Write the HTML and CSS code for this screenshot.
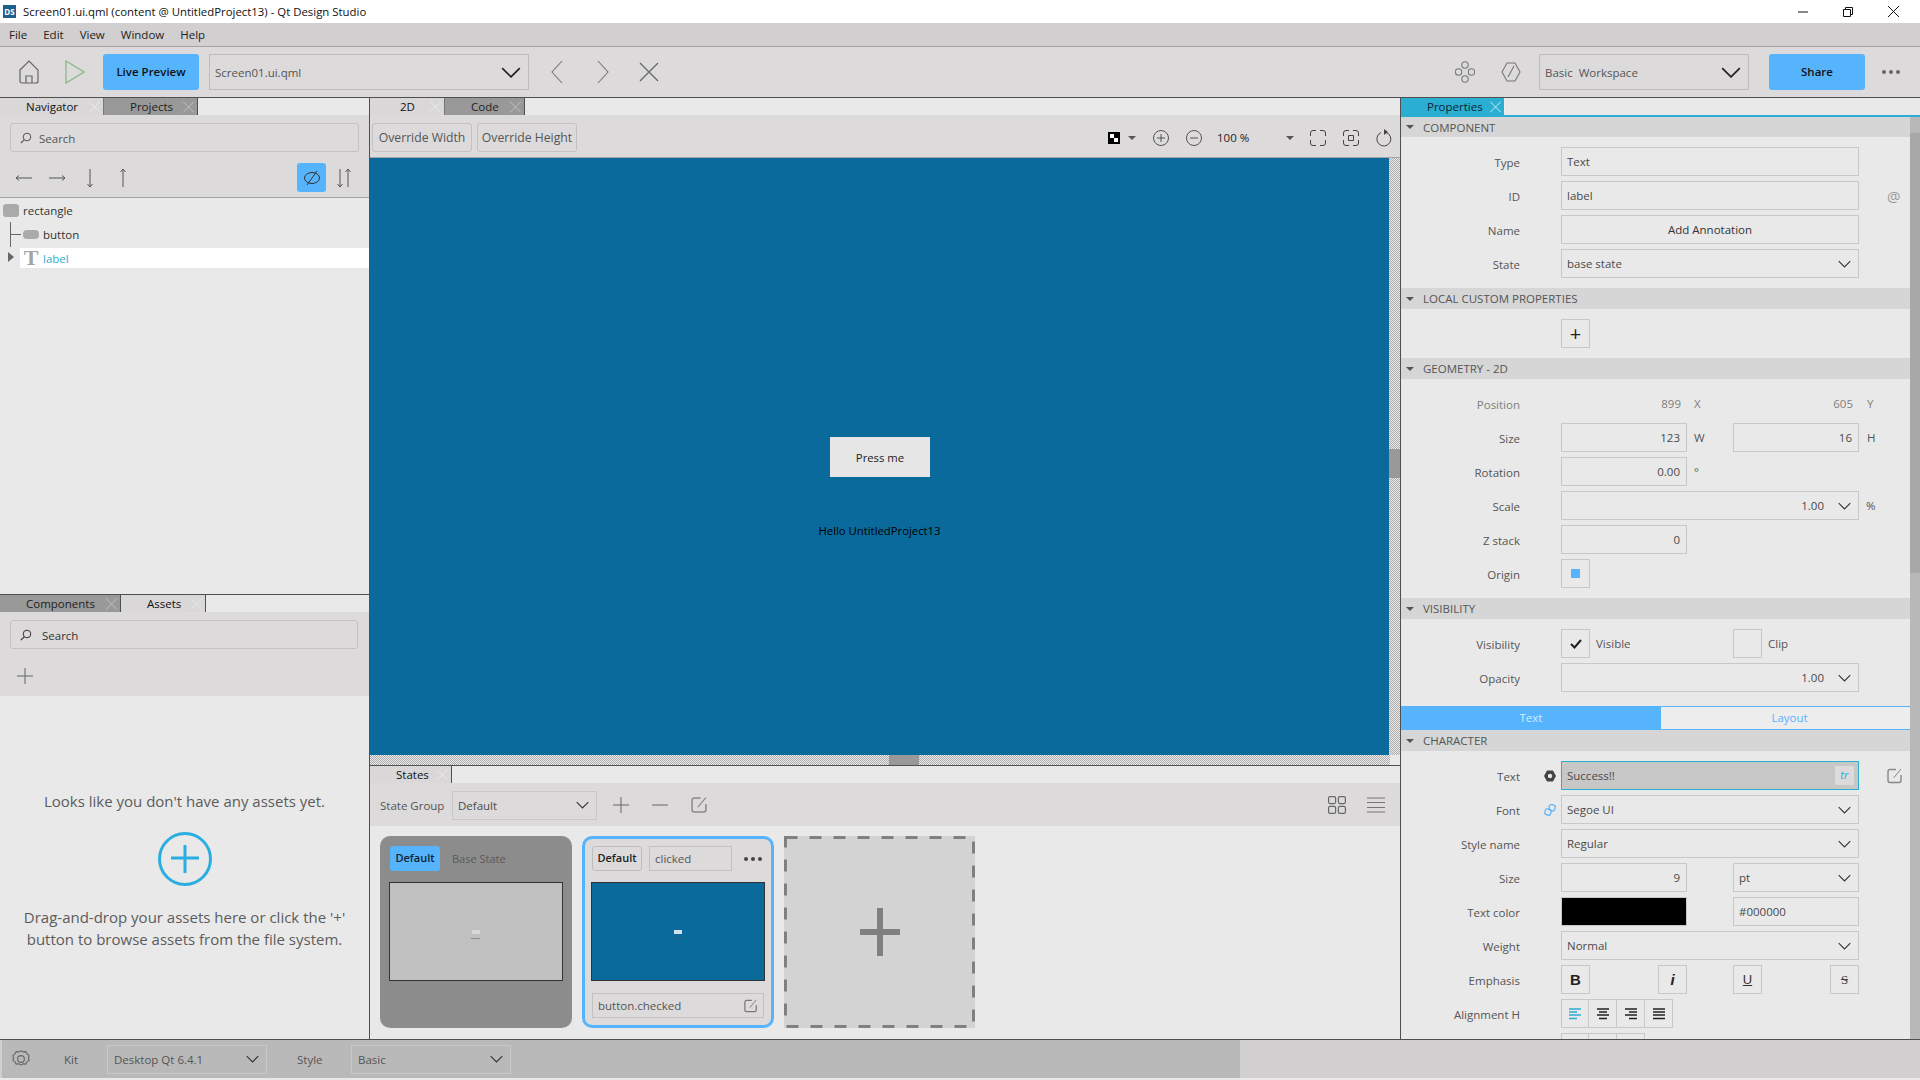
FILE: index.html
```html
<!DOCTYPE html>
<html lang="en">
<head>
<meta charset="utf-8">
<title>Screen01.ui.qml (content @ UntitledProject13) - Qt Design Studio</title>
<link rel="stylesheet" href="styles.css">
</head>
<body>
<svg class="defs" width="0" height="0">
  <symbol id="chev" viewBox="0 0 18 10"><path d="M1 1l8 8 8-8" fill="none" stroke="currentColor" stroke-width="1.5"/></symbol>
  <symbol id="x" viewBox="0 0 12 12"><path d="M0 0l12 12M12 0L0 12" fill="none" stroke="currentColor" stroke-width="1"/></symbol>
  <symbol id="edit" viewBox="0 0 16 16"><path d="M9 1.500H3a2 2 0 0 0-2 2v9a2 2 0 0 0 2 2h9a2 2 0 0 0 2-2V7" fill="none" stroke="currentColor" stroke-width="1.400"/><path d="M6.500 10L14 1" fill="none" stroke="currentColor" stroke-width="1"/></symbol>
  <symbol id="plus" viewBox="0 0 16 16"><path d="M8 0v16M0 8h16" fill="none" stroke="currentColor" stroke-width="1"/></symbol>
  <symbol id="search" viewBox="0 0 12 12"><circle cx="7" cy="5" r="3.800" fill="none" stroke="currentColor" stroke-width="1"/><path d="M4.200 7.800L.8 11.200" stroke="currentColor" stroke-width="1.200"/></symbol>
</svg>

<div class="window">
  <div class="titlebar">
    <div class="app-icon">DS</div>
    <div class="title-text">Screen01.ui.qml (content @ UntitledProject13) - Qt Design Studio</div>
    <div class="win-buttons">
      <svg width="10" height="10" viewBox="0 0 10 10"><path d="M0 5h10" stroke="#111"/></svg>
      <svg width="10" height="10" viewBox="0 0 10 10"><path d="M.5 2.500h7v7h-7zM2.500 2.500v-2h7v7h-2" fill="none" stroke="#111"/></svg>
      <svg width="11" height="11" viewBox="0 0 11 11"><path d="M0 0l11 11M11 0L0 11" stroke="#111"/></svg>
    </div>
  </div>
  <div class="menubar">
    <span>File</span><span>Edit</span><span>View</span><span>Window</span><span>Help</span>
  </div>
  <div class="mainbar">
    <svg class="ic-home" width="20" height="24" viewBox="0 0 20 24"><path d="M1 10L10 1l9 9v11a2 2 0 0 1-2 2H3a2 2 0 0 1-2-2zM7 23v-7h6v7" fill="none" stroke="#666" stroke-width="1.200"/></svg>
    <svg class="ic-play" width="20" height="24" viewBox="0 0 20 24"><path d="M1 1l18 11L1 23z" fill="none" stroke="#8db68d" stroke-width="1.300"/></svg>
    <div class="btn-blue btn-live">Live Preview</div>
    <div class="top-combo doc-combo"><span>Screen01.ui.qml</span><svg class="chev-big"><use href="#chev"/></svg></div>
    <svg class="ic-nav" width="12" height="24" viewBox="0 0 12 24"><path d="M11 1L1 12l10 11" fill="none" stroke="#777" stroke-width="1.100"/></svg>
    <svg class="ic-nav2" width="12" height="24" viewBox="0 0 12 24"><path d="M1 1l10 11L1 23" fill="none" stroke="#777" stroke-width="1.100"/></svg>
    <svg class="ic-nav3" width="20" height="20" viewBox="0 0 20 20"><path d="M1 1l18 18M19 1L1 19" fill="none" stroke="#666" stroke-width="1.200"/></svg>
    <div class="spacer"></div>
    <svg class="ic-flow" width="20" height="24" viewBox="0 0 20 24"><g fill="none" stroke="#777" stroke-width="1.100"><circle cx="10" cy="5" r="3.200"/><circle cx="10" cy="19" r="3.200"/><circle cx="3.500" cy="12" r="3.200"/><circle cx="16.500" cy="12" r="3.200"/></g></svg>
    <svg class="ic-hex" width="20" height="22" viewBox="0 0 20 22"><path d="M6 2h8l5 9-5 9H6L1 11zM7 16L13 5" fill="none" stroke="#777" stroke-width="1.100"/></svg>
    <div class="top-combo ws-combo"><span>Basic&nbsp; Workspace</span><svg class="chev-big"><use href="#chev"/></svg></div>
    <div class="btn-blue btn-share">Share</div>
    <div class="dots top-dots"><i></i><i></i><i></i></div>
  </div>

  <div class="workspace">
    <div class="col-left">
      <div class="pane pane-nav">
        <div class="tabs">
          <div class="tab active w-navigator"><span>Navigator</span><svg class="tab-x"><use href="#x"/></svg></div>
          <div class="tab w-projects"><span>Projects</span><svg class="tab-x"><use href="#x"/></svg></div>
        </div>
        <div class="nav-tools">
          <div class="search"><svg width="12" height="12"><use href="#search"/></svg><span>Search</span></div>
          <div class="arrow-row">
            <svg class="arrow" width="16" height="16" viewBox="0 0 16 16"><path d="M0 8h16M0 8l3-2.500M0 8l3 2.500" fill="none" stroke="#555"/></svg>
            <svg class="arrow" width="16" height="16" viewBox="0 0 16 16"><path d="M0 8h16M16 8l-3-2.500M16 8l-3 2.500" fill="none" stroke="#555"/></svg>
            <svg class="arrow" width="16" height="18" viewBox="0 0 16 18"><path d="M8 0v18M8 18l-2.500-3M8 18l2.500-3" fill="none" stroke="#555"/></svg>
            <svg class="arrow" width="16" height="18" viewBox="0 0 16 18"><path d="M8 0v18M8 0L5.500 3M8 0l2.500 3" fill="none" stroke="#555"/></svg>
            <div class="spacer"></div>
            <div class="eye-btn"><svg width="18" height="18" viewBox="0 0 18 18"><ellipse cx="9" cy="9" rx="7.500" ry="5.500" fill="none" stroke="#333"/><path d="M4 16L14 2" stroke="#333"/></svg></div>
            <svg class="sort" width="16" height="20" viewBox="0 0 16 20"><path d="M4 1v18M4 19l-2.500-3M4 19l2.500-3M12 19V1M12 1L9.500 4M12 1l2.500 3" fill="none" stroke="#555"/></svg>
          </div>
        </div>
        <div class="tree">
          <div class="tree-lines"></div>
          <div class="tree-row root"><i class="node-rect"></i><span>rectangle</span></div>
          <div class="tree-row child"><i class="node-btn"></i><span>button</span></div>
          <div class="tree-row child selected"><b class="node-text">T</b><span>label</span></div>
          <div class="tree-arrow"></div>
        </div>
      </div>
      <div class="pane pane-assets">
        <div class="tabs">
          <div class="tab w-components"><span>Components</span><svg class="tab-x"><use href="#x"/></svg></div>
          <div class="tab active w-assets"><span>Assets</span><svg class="tab-x"><use href="#x"/></svg></div>
        </div>
        <div class="asset-tools">
          <div class="search dark"><svg width="12" height="12"><use href="#search"/></svg><span>Search</span></div>
          <svg class="asset-plus" width="16" height="16"><use href="#plus"/></svg>
        </div>
        <div class="asset-empty">
          <p>Looks like you don't have any assets yet.</p>
          <svg class="add-circle" width="56" height="56" viewBox="0 0 56 56"><circle cx="28" cy="28" r="25.500" fill="none" stroke="#2aaee2" stroke-width="3"/><path d="M28 14v28M14 27h28" stroke="#2aaee2" stroke-width="3"/></svg>
          <p>Drag-and-drop your assets here or click the '+'<br>button to browse assets from the file system.</p>
        </div>
      </div>
    </div>

    <div class="col-center">
      <div class="tabs">
        <div class="tab active w-2d"><span>2D</span><svg class="tab-x"><use href="#x"/></svg></div>
        <div class="tab w-code"><span>Code</span><svg class="tab-x"><use href="#x"/></svg></div>
      </div>
      <div class="canvas-tools">
        <div class="tool-btn">Override Width</div>
        <div class="tool-btn">Override Height</div>
        <div class="spacer"></div>
        <div class="checker-ic"></div><i class="caret c1"></i>
        <svg class="zoom-in" width="18" height="18" viewBox="0 0 18 18"><circle cx="9" cy="9" r="7.500" fill="none" stroke="#555"/><path d="M9 5v8M5 9h8" stroke="#555"/></svg>
        <svg class="zoom-out" width="18" height="18" viewBox="0 0 18 18"><circle cx="9" cy="9" r="7.500" fill="none" stroke="#555"/><path d="M5 9h8" stroke="#555"/></svg>
        <span class="zoom-val">100 %</span><i class="caret c2"></i>
        <svg class="fit1" width="16" height="16" viewBox="0 0 16 16"><path d="M6 .5H3A2.500 2.500 0 0 0 .5 3v3M10 .5h3A2.500 2.500 0 0 1 15.500 3v3M6 15.500H3A2.500 2.500 0 0 1 .5 13v-3M10 15.500h3a2.500 2.500 0 0 0 2.500-2.500v-3" fill="none" stroke="#444"/></svg>
        <svg class="fit2" width="16" height="16" viewBox="0 0 16 16"><path d="M6 .5H3A2.500 2.500 0 0 0 .5 3v3M10 .5h3A2.500 2.500 0 0 1 15.500 3v3M6 15.500H3A2.500 2.500 0 0 1 .5 13v-3M10 15.500h3a2.500 2.500 0 0 0 2.500-2.500v-3M5.500 5.500h5v5h-5z" fill="none" stroke="#444"/></svg>
        <svg class="refresh" width="16" height="18" viewBox="0 0 16 18"><path d="M9.500 3.200A7 7 0 1 1 5 3.600" fill="none" stroke="#444"/><path d="M8 0l4 3-4 3z" fill="#444"/></svg>
      </div>
      <div class="canvas-wrap">
        <div class="canvas-row">
          <div class="canvas">
            <div class="qml-button">Press me</div>
            <div class="qml-label">Hello UntitledProject13</div>
          </div>
          <div class="scroll-v"><i></i></div>
        </div>
        <div class="scroll-row"><div class="scroll-h"><i></i></div><div class="scroll-corner"></div></div>
      </div>
      <div class="states">
        <div class="tabs">
          <div class="tab active w-states"><span>States</span><svg class="tab-x"><use href="#x"/></svg></div>
        </div>
        <div class="state-tools">
          <span class="state-group">State Group</span>
          <div class="field combo state-combo"><span>Default</span><svg class="chev"><use href="#chev"/></svg></div>
          <svg class="st-plus" width="16" height="16"><use href="#plus"/></svg>
          <svg class="st-minus" width="16" height="16" viewBox="0 0 16 16"><path d="M0 8h16" stroke="#666"/></svg>
          <svg class="st-edit" width="17" height="20"><use href="#edit"/></svg>
          <div class="spacer"></div>
          <svg class="st-grid" width="18" height="18" viewBox="0 0 18 18"><g fill="none" stroke="#666" stroke-width="1.200"><rect x=".6" y=".6" width="7" height="7" rx="1.500"/><rect x="10.400" y=".6" width="7" height="7" rx="1.500"/><rect x=".6" y="10.400" width="7" height="7" rx="1.500"/><rect x="10.400" y="10.400" width="7" height="7" rx="1.500"/></g></svg>
          <svg class="st-list" width="18" height="16" viewBox="0 0 18 16"><path d="M0 1h18M0 5.500h18M0 10.500h18M0 15h18" stroke="#777"/></svg>
        </div>
        <div class="state-cards">
          <div class="card base">
            <div class="card-head"><div class="btn-default on">Default</div><span class="base-name">Base State</span></div>
            <div class="thumb gray"><i></i><u></u></div>
          </div>
          <div class="card current">
            <div class="card-head"><div class="btn-default">Default</div><div class="state-name">clicked</div><div class="dots card-dots"><i></i><i></i><i></i></div></div>
            <div class="thumb blue"><i></i><u></u></div>
            <div class="condition"><span>button.checked</span><svg width="14" height="16"><use href="#edit"/></svg></div>
          </div>
          <div class="card add">
            <svg class="dash" width="191" height="192"><rect x="1.500" y="1.500" width="188" height="189" fill="none" stroke="#808080" stroke-width="3" stroke-dasharray="12 12"/></svg>
            <svg width="40" height="48" viewBox="0 0 40 48"><path d="M20 0v48M0 24h40" stroke="#808080" stroke-width="6"/></svg>
          </div>
        </div>
      </div>
    </div>

    <div class="col-right">
      <div class="tabs props-tabs">
        <div class="tab prop-tab"><span>Properties</span><svg class="tab-x"><use href="#x"/></svg></div>
      </div>
      <div class="props-body">
        <div class="props">
          <div class="head first"><i class="tri"></i>COMPONENT</div>
          <div class="sec">
            <div class="row"><label>Type</label><div class="field wide">Text</div></div>
            <div class="row"><label>ID</label><div class="field wide">label</div><span class="at">@</span></div>
            <div class="row"><label>Name</label><div class="field wide center">Add Annotation</div></div>
            <div class="row"><label>State</label><div class="field wide combo"><span>base state</span><svg class="chev"><use href="#chev"/></svg></div></div>
          </div>
          <div class="head"><i class="tri"></i>LOCAL CUSTOM PROPERTIES</div>
          <div class="sec">
            <div class="row"><label></label><div class="box plus-box">+</div></div>
          </div>
          <div class="head"><i class="tri"></i>GEOMETRY - 2D</div>
          <div class="sec">
            <div class="row muted"><label>Position</label><div class="num plain">899</div><span class="unit">X</span><div class="num plain">605</div><span class="unit2">Y</span></div>
            <div class="row"><label>Size</label><div class="field num">123</div><span class="unit">W</span><div class="field num">16</div><span class="unit2">H</span></div>
            <div class="row"><label>Rotation</label><div class="field num">0.00</div><span class="unit">°</span></div>
            <div class="row"><label>Scale</label><div class="field wide combo end"><span>1.00</span><svg class="chev"><use href="#chev"/></svg></div><span class="unit pct">%</span></div>
            <div class="row"><label>Z stack</label><div class="field num">0</div></div>
            <div class="row"><label>Origin</label><div class="box"><i class="origin"></i></div></div>
          </div>
          <div class="head"><i class="tri"></i>VISIBILITY</div>
          <div class="sec vis">
            <div class="row"><label>Visibility</label><div class="box"><svg width="12" height="10" viewBox="0 0 12 10"><path d="M1 5l3.500 3.500L11 1" fill="none" stroke="#222" stroke-width="2"/></svg></div><span class="check-label">Visible</span><div class="box"></div><span class="check-label">Clip</span></div>
            <div class="row"><label>Opacity</label><div class="field wide combo end"><span>1.00</span><svg class="chev"><use href="#chev"/></svg></div></div>
          </div>
          <div class="subtabs"><div class="sub on">Text</div><div class="sub">Layout</div></div>
          <div class="head"><i class="tri"></i>CHARACTER</div>
          <div class="sec">
            <div class="row"><label>Text</label><svg class="lead" width="12" height="12" viewBox="0 0 12 12"><path d="M3 .5h6L12 6 9 11.500H3L0 6z" fill="#444"/><circle cx="6" cy="6" r="2.200" fill="#e9e9e9"/></svg><div class="field wide active-field"><span>Success!!</span><em>tr</em></div><svg class="side-edit" width="16" height="16"><use href="#edit"/></svg></div>
            <div class="row"><label>Font</label><svg class="lead" width="12" height="12" viewBox="0 0 12 12"><g fill="none" stroke="#56b4fc" stroke-width="1.200"><rect x="5" y=".7" width="6" height="6" rx="2" transform="rotate(15 8 4)"/><rect x="1" y="5" width="6" height="6" rx="2" transform="rotate(15 4 8)"/></g></svg><div class="field wide combo"><span>Segoe UI</span><svg class="chev"><use href="#chev"/></svg></div></div>
            <div class="row"><label>Style name</label><div class="field wide combo"><span>Regular</span><svg class="chev"><use href="#chev"/></svg></div></div>
            <div class="row"><label>Size</label><div class="field num">9</div><span class="gap"></span><div class="field half combo"><span>pt</span><svg class="chev"><use href="#chev"/></svg></div></div>
            <div class="row"><label>Text color</label><div class="swatch"></div><span class="gap"></span><div class="field half">#000000</div></div>
            <div class="row"><label>Weight</label><div class="field wide combo"><span>Normal</span><svg class="chev"><use href="#chev"/></svg></div></div>
            <div class="row emph"><label>Emphasis</label><div class="box"><b>B</b></div><div class="box"><b><i>i</i></b></div><div class="box"><u>U</u></div><div class="box"><s>S</s></div></div>
            <div class="row"><label>Alignment H</label>
              <div class="seg">
                <div class="box"><svg width="12" height="12" viewBox="0 0 12 12"><path d="M0 1h12M0 4h8M0 7h12M0 10.500h8" stroke="#2aaed3" stroke-width="1.400"/></svg></div>
                <div class="box"><svg width="12" height="12" viewBox="0 0 12 12"><path d="M0 1h12M2 4h8M0 7h12M2 10.500h8" stroke="#222" stroke-width="1.400"/></svg></div>
                <div class="box"><svg width="12" height="12" viewBox="0 0 12 12"><path d="M0 1h12M4 4h8M0 7h12M4 10.500h8" stroke="#222" stroke-width="1.400"/></svg></div>
                <div class="box"><svg width="12" height="12" viewBox="0 0 12 12"><path d="M0 1h12M0 4h12M0 7h12M0 10.500h12" stroke="#222" stroke-width="1.400"/></svg></div>
              </div>
            </div>
            <div class="row"><label></label><div class="seg"><div class="box"></div><div class="box"></div><div class="box"></div></div></div>
          </div>
        </div>
        <div class="props-scroll"><i></i></div>
      </div>
    </div>
  </div>

  <div class="statusbar">
    <div class="status-left">
      <svg class="gear" width="18" height="18" viewBox="0 0 16 16"><path d="M8 .7l2 1 2.300-.2 1 2 1.900 1.300-.5 2.200.5 2.200-1.900 1.300-1 2-2.300-.2-2 1-2-1-2.300.2-1-2L.8 9.200 1.300 7 .8 4.800l1.900-1.300 1-2L6 1.700z" fill="none" stroke="#666"/><circle cx="8" cy="8" r="3" fill="none" stroke="#666"/></svg>
      <span class="st-kit">Kit</span>
      <div class="status-combo"><span>Desktop Qt 6.4.1</span><svg class="chev"><use href="#chev"/></svg></div>
      <span class="st-style">Style</span>
      <div class="status-combo"><span>Basic</span><svg class="chev"><use href="#chev"/></svg></div>
    </div>
  </div>
</div>
</body>
</html>
```

FILE: styles.css
```css
html, body {
  margin: 0;
  padding: 0;
  background: #e9e9e9;
}
body {
  font-family: "Open Sans", "Liberation Sans", sans-serif;
  font-size: 11.5px;
  color: #4a4a4a;
}
.defs { position: absolute; }
.spacer { flex: 1; }
.window {
  width: 1920px;
  height: 1080px;
  display: flex;
  flex-direction: column;
  overflow: hidden;
}

/* title + menu + main toolbar */
.titlebar {
  height: 23px;
  background: #fff;
  display: flex;
  align-items: center;
  color: #111;
}
.app-icon {
  width: 13px;
  height: 13px;
  margin-left: 3px;
  margin-right: 7px;
  background: #1f5f8b;
  color: #fff;
  font-size: 8px;
  line-height: 13px;
  text-align: center;
  font-weight: 700;
}
.title-text { flex: 1; font-size: 11.4px; }
.win-buttons {
  display: flex;
  align-items: center;
  gap: 35px;
  padding-right: 21px;
}
.menubar {
  height: 23px;
  background: #d1cfd0;
  border-bottom: 1px solid #a4a4a4;
  display: flex;
  align-items: center;
  padding-left: 9px;
  gap: 16px;
  color: #222;
}
.mainbar {
  height: 50px;
  background: #dcdadb;
  border-bottom: 1px solid #4f4f4f;
  display: flex;
  align-items: center;
}
.ic-home { margin-left: 19px; }
.ic-play { margin-left: 26px; }
.btn-blue {
  height: 36px;
  line-height: 36px;
  text-align: center;
  background: #56b4fc;
  border-radius: 3px;
  color: #111;
  font-weight: 600;
  font-size: 11.5px;
}
.btn-live { width: 96px; margin-left: 18px; }
.top-combo {
  height: 36px;
  box-sizing: border-box;
  border: 1px solid #bdbdbd;
  display: flex;
  align-items: center;
  justify-content: space-between;
  padding: 0 7px 0 5px;
  color: #555;
}
.doc-combo { width: 320px; margin-left: 10px; }
.ws-combo { width: 210px; margin-left: 18px; }
.chev-big { width: 20px; height: 11px; color: #222; }
.ic-nav { margin-left: 22px; }
.ic-nav2 { margin-left: 34px; }
.ic-nav3 { margin-left: 30px; }
.ic-flow { margin-right: 26px; }
.btn-share { width: 96px; margin-left: 20px; }
.dots { display: flex; gap: 3px; }
.dots i {
  width: 4px;
  height: 4px;
  border-radius: 50%;
  background: #666;
}
.top-dots { margin-left: 17px; margin-right: 20px; }

/* docked panes */
.workspace {
  height: 941px;
  display: flex;
  border-bottom: 1px solid #4f4f4f;
  background: #e9e9e9;
}
.col-left {
  width: 369px;
  border-right: 1px solid #4f4f4f;
  display: flex;
  flex-direction: column;
}
.col-center {
  width: 1030px;
  border-right: 1px solid #4f4f4f;
  display: flex;
  flex-direction: column;
}
.col-right {
  width: 519px;
  display: flex;
  flex-direction: column;
}
.tabs {
  height: 17px;
  display: flex;
  background: #e9e9e9;
  flex: none;
}
.tab {
  height: 17px;
  box-sizing: border-box;
  background: #999;
  border-right: 1px solid #4f4f4f;
  display: flex;
  align-items: center;
  justify-content: space-between;
  color: #222;
  padding-right: 3px;
}
.tab.active { background: #d9d7d8; color: #111; }
.tab-x { width: 11px; height: 12px; color: #c4c4c4; }
.tab.active .tab-x { color: #ececec; }
.w-navigator { width: 104px; padding-left: 26px; border-right-color: #777; }
.w-projects { width: 94px; padding-left: 26px; }
.w-2d { width: 75px; padding-left: 30px; border-right-color: #777; }
.w-code { width: 80px; padding-left: 26px; }
.w-components { width: 121px; padding-left: 26px; }
.w-assets { width: 85px; padding-left: 26px; }
.w-states { width: 82px; padding-left: 26px; }
.prop-tab { width: 104px; padding-left: 26px; background: #2aafd3; border-right: 1px solid #eee; color: #123; }
.prop-tab .tab-x { color: #d8f0f8; }

.pane-nav { height: 496px; display: flex; flex-direction: column; }
.pane-assets {
  flex: 1;
  border-top: 1px solid #4f4f4f;
  display: flex;
  flex-direction: column;
}
.nav-tools {
  height: 83px;
  background: #dcdadb;
  border-bottom: 1px solid #a4a4a4;
  box-sizing: border-box;
  padding: 8px 10px 0 10px;
}
.search {
  height: 29px;
  box-sizing: border-box;
  border: 1px solid #c2c2c2;
  border-radius: 3px;
  display: flex;
  align-items: center;
  padding-left: 9px;
  gap: 7px;
  color: #555;
}
.search span { padding-top: 1px; }
.search.dark { color: #333; gap: 10px; }
.arrow-row {
  display: flex;
  align-items: center;
  height: 29px;
  margin-top: 11px;
  margin-left: 6px;
  margin-right: 7px;
}
.arrow { margin-right: 17px; }
.eye-btn {
  width: 29px;
  height: 29px;
  background: #56b4fc;
  border-radius: 3px;
  display: flex;
  align-items: center;
  justify-content: center;
}
.sort { margin-left: 10px; }

.tree { position: relative; flex: 1; }
.tree-row {
  height: 24px;
  display: flex;
  align-items: center;
  color: #333;
}
.tree-row.root { padding-left: 3px; gap: 4px; }
.tree-row.child { margin-left: 20px; padding-left: 3px; gap: 4px; }
.tree-row.selected { height: 20px; margin-top: 2px; background: #fff; color: #2aaed3; }
.node-rect { width: 16px; height: 13px; border-radius: 3px; background: #aaa; }
.node-btn { width: 16px; height: 9px; border-radius: 4px; background: #aaa; }
.node-text {
  width: 16px;
  font-family: "Liberation Serif", serif;
  font-size: 22px;
  line-height: 20px;
  text-align: center;
  color: #a4a4a4;
}
.tree-lines {
  position: absolute;
  left: 10px;
  top: 24px;
  width: 10px;
  height: 12px;
  border-left: 1px solid #666;
  border-bottom: 1px solid #666;
}
.tree-lines::after {
  content: "";
  position: absolute;
  left: -1px;
  top: 13px;
  height: 12px;
  width: 9px;
  border-left: 1px solid #666;
}
.tree-arrow {
  position: absolute;
  left: 8px;
  top: 54px;
  border-left: 6px solid #666;
  border-top: 5px solid transparent;
  border-bottom: 5px solid transparent;
}

.asset-tools {
  height: 84px;
  box-sizing: border-box;
  background: #dcdadb;
  padding: 8px 11px 0 10px;
}
.asset-plus { display: block; margin: 19px 0 0 7px; color: #666; }
.asset-empty {
  flex: 1;
  box-sizing: border-box;
  padding-top: 94px;
  text-align: center;
  font-size: 15px;
  line-height: 22px;
  color: #5c5c5c;
  display: flex;
  flex-direction: column;
  align-items: center;
}
.asset-empty p { margin: 0; }
.add-circle { margin: 19px 0 19px; }

/* form editor */
.canvas-tools {
  height: 43px;
  box-sizing: border-box;
  background: #dcdadb;
  border-bottom: 1px solid #a4a4a4;
  display: flex;
  align-items: center;
  padding: 3px 0 0 2px;
  flex: none;
}
.tool-btn {
  width: 100px;
  height: 29px;
  box-sizing: border-box;
  border: 1px solid #c2c2c2;
  border-radius: 3px;
  line-height: 27px;
  text-align: center;
  margin-right: 5px;
  color: #555;
  font-size: 12.2px;
}
.checker-ic {
  width: 12px;
  height: 12px;
  background:
    linear-gradient(#fff, #fff) 2px 2px / 4px 4px no-repeat,
    linear-gradient(#fff, #fff) 6px 6px / 4px 4px no-repeat,
    #000;
}
.caret {
  width: 0;
  height: 0;
  border-left: 4px solid transparent;
  border-right: 4px solid transparent;
  border-top: 4px solid #555;
}
.c1 { margin-left: 8px; }
.zoom-in { margin-left: 16px; }
.zoom-out { margin-left: 15px; }
.zoom-val { margin-left: 14px; width: 69px; color: #222; }
.fit1 { margin-left: 16px; }
.fit2 { margin-left: 17px; }
.refresh { margin-left: 17px; margin-right: 8px; }

.canvas-wrap { height: 607px; display: flex; flex-direction: column; flex: none; border-bottom: 1px solid #4f4f4f; }
.canvas-row { height: 597px; display: flex; }
.canvas {
  width: 1019px;
  height: 597px;
  background: #0a6a9c;
  position: relative;
  color: #000;
}
.qml-button {
  position: absolute;
  left: 460px;
  top: 279px;
  width: 100px;
  height: 40px;
  line-height: 42px;
  text-align: center;
  background: #e6e6e6;
  color: #222;
  font-size: 11.3px;
}
.qml-label {
  position: absolute;
  left: 0;
  width: 1019px;
  top: 365px;
  text-align: center;
  color: #000;
  font-size: 11.3px;
}
.scroll-v {
  flex: 1;
  background: repeating-conic-gradient(#a8a8a8 0 25%, #eee 0 50%) 0 0 / 2px 2px;
  padding-top: 291px;
}
.scroll-v i { display: block; height: 29px; background: #999; }
.scroll-row { height: 10px; display: flex; }
.scroll-h {
  width: 1020px;
  background: repeating-conic-gradient(#a8a8a8 0 25%, #eee 0 50%) 0 0 / 2px 2px;
  padding-left: 519px;
  box-sizing: border-box;
}
.scroll-h i { display: block; width: 30px; height: 10px; background: #999; }
.scroll-corner { flex: 1; background: #e9e9e9; }

.states { flex: 1; display: flex; flex-direction: column; }
.state-tools {
  height: 43px;
  box-sizing: border-box;
  background: #dcdadb;
  display: flex;
  align-items: center;
  padding: 1px 0 0 10px;
  flex: none;
  color: #555;
}
.state-group { width: 72px; }
.st-plus { margin-left: 16px; color: #666; }
.st-minus { margin-left: 23px; }
.st-edit { margin-left: 23px; color: #888; }
.st-grid { margin-right: 21px; }
.st-list { margin-right: 15px; }
.state-cards {
  display: flex;
  gap: 10px;
  padding: 10px 0 0 10px;
}
.card {
  width: 192px;
  height: 192px;
  box-sizing: border-box;
  border-radius: 10px;
  padding: 10px 9px;
}
.card.base { background: #8c8c8c; }
.card.current { border: 3px solid #56b4fc; background: #dcdadb; padding: 7px 6px; }
.card.add {
  width: 191px;
  border-radius: 0;
  background: #d3d3d3;
  position: relative;
  display: flex;
  align-items: center;
  justify-content: center;
}
.dash { position: absolute; left: 0; top: 0; }
.card-head { height: 25px; display: flex; align-items: center; margin-left: 1px; }
.btn-default {
  width: 50px;
  height: 25px;
  box-sizing: border-box;
  border: 1px solid #bdbdbd;
  border-radius: 3px;
  line-height: 22px;
  text-align: center;
  color: #222;
  font-weight: 600;
  font-size: 11px;
}
.btn-default.on { background: #56b4fc; border: none; line-height: 24px; color: #123; }
.base-name { margin-left: 12px; color: #5a5a5a; font-size: 11px; }
.state-name {
  width: 83px;
  height: 25px;
  box-sizing: border-box;
  margin-left: 7px;
  border: 1px solid #c2c2c2;
  line-height: 24px;
  padding-left: 5px;
  color: #555;
}
.card-dots { margin-left: 12px; }
.card-dots i { background: #444; }
.thumb {
  width: 174px;
  height: 99px;
  box-sizing: border-box;
  border: 1px solid #333;
  margin-top: 11px;
  position: relative;
}
.thumb.gray { background: #c0c0c0; }
.thumb.blue { background: #0a6a9c; }
.thumb i {
  position: absolute;
  left: 82px;
  top: 47px;
  width: 8px;
  height: 4px;
  background: #cfe0ea;
}
.thumb.gray i { background: #d8d8d8; }
.thumb u {
  position: absolute;
  left: 81px;
  top: 55px;
  width: 9px;
  height: 1px;
  background: #555;
  opacity: .5;
}
.condition {
  width: 172px;
  height: 25px;
  box-sizing: border-box;
  margin: 12px 0 0 1px;
  border: 1px solid #c2c2c2;
  display: flex;
  align-items: center;
  justify-content: space-between;
  padding: 0 5px;
  color: #555;
}
.condition svg { color: #777; }

/* property editor */
.props-tabs { height: 17px; }
.props-body {
  flex: 1;
  display: flex;
  border-top: 2px solid #2aafd3;
  overflow: hidden;
}
.props { width: 509px; flex: none; }
.props-scroll { flex: 1; background: #b8b8b8; padding-top: 16px; }
.props-scroll i { display: block; height: 440px; background: #a8a8a8; }
.head {
  height: 21px;
  background: #d6d6d6;
  display: flex;
  align-items: center;
  color: #555;
}
.head.first { height: 20px; }
.tri {
  width: 0;
  height: 0;
  border-left: 4px solid transparent;
  border-right: 4px solid transparent;
  border-top: 4px solid #555;
  margin: 0 9px 0 5px;
}
.sec { padding: 10px 0 5px; }
.sec.vis { padding-bottom: 9px; }
.row {
  height: 29px;
  margin-bottom: 5px;
  display: flex;
  align-items: center;
  position: relative;
}
.row label {
  width: 119px;
  margin-right: 41px;
  flex: none;
  text-align: right;
  color: #555;
  padding-top: 1px;
}
.field {
  height: 29px;
  box-sizing: border-box;
  border: 1px solid #c8c8c8;
  line-height: 27px;
  padding: 0 5px;
  color: #4a4a4a;
  width: 126px;
  flex: none;
}
.field.wide { width: 298px; }
.field.half { width: 126px; }
.field.state-combo { width: 145px; }
.field.center { text-align: center; color: #333; }
.num { width: 126px; text-align: right; padding-right: 6px; box-sizing: border-box; flex: none; }
.num.plain { color: #808080; }
.row.muted label, .row.muted .unit, .row.muted .unit2 { color: #808080; }
.unit { width: 46px; flex: none; box-sizing: border-box; padding-left: 7px; color: #555; }
.unit2 { margin-left: 8px; color: #555; }
.pct { position: absolute; left: 465px; padding: 0; }
.gap { width: 46px; flex: none; }
.combo {
  display: flex;
  align-items: center;
  justify-content: space-between;
  padding-right: 7px;
}
.combo.end { justify-content: flex-end; gap: 14px; }
.chev { width: 13px; height: 8px; color: #333; flex: none; }
.box {
  width: 29px;
  height: 29px;
  box-sizing: border-box;
  border: 1px solid #c8c8c8;
  display: flex;
  align-items: center;
  justify-content: center;
  flex: none;
  color: #222;
}
.plus-box { font-size: 20px; color: #222; }
.origin { width: 9px; height: 9px; background: #56b4fc; }
.check-label { width: 143px; padding-left: 6px; box-sizing: border-box; color: #555; flex: none; }
.check-label:last-child { width: auto; }
.at { position: absolute; left: 486px; font-size: 15px; color: #999; }
.subtabs { height: 24px; display: flex; }
.sub {
  flex: 1;
  box-sizing: border-box;
  border-top: 1px solid #56b4fc;
  border-bottom: 1px solid #56b4fc;
  text-align: center;
  line-height: 22px;
  padding-left: 8px;
  color: #56b4fc;
  background: #ededed;
}
.sub.on { flex: none; width: 260px; padding-left: 0; background: #56b4fc; color: #d4ecff; }
.lead { position: absolute; left: 143px; }
.active-field {
  background: #c7c7c7;
  border-color: #2aaed3;
  display: flex;
  align-items: center;
  justify-content: space-between;
  padding-right: 4px;
}
.active-field em {
  width: 19px;
  height: 19px;
  line-height: 18px;
  text-align: center;
  background: #dcdadb;
  color: #2aaed3;
}
.side-edit { position: absolute; left: 486px; color: #888; }
.swatch {
  width: 126px;
  height: 29px;
  box-sizing: border-box;
  background: #000;
  border: 1px solid #c8c8c8;
  flex: none;
}
.emph .box { font-size: 15px; color: #222; font-family: "Liberation Sans", sans-serif; }
.emph .box u { font-size: 13px; color: #333; }
.emph .box s { font-size: 13px; color: #444; font-family: "Liberation Serif", serif; }
.emph .box:nth-child(3) { margin-left: 68px; }
.emph .box:nth-child(4) { margin-left: 46px; }
.emph .box:nth-child(5) { margin-left: 68px; }
.seg { display: flex; }
.seg .box { width: 28px; }
.seg .box:not(:first-child) { border-left: none; }

/* status bar */
.statusbar {
  height: 38px;
  margin-bottom: 2px;
  background: #d1cfd0;
  flex: none;
}
.status-left {
  width: 1238px;
  height: 38px;
  background: #b9b9b9;
  display: flex;
  align-items: center;
  margin-left: 2px;
  color: #555;
}
.gear { margin-left: 10px; }
.st-kit { margin-left: 34px; width: 43px; }
.status-combo {
  width: 160px;
  height: 29px;
  box-sizing: border-box;
  border: 1px solid #c8c8c8;
  display: flex;
  align-items: center;
  justify-content: space-between;
  padding: 0 7px 0 6px;
}
.st-style { margin-left: 30px; width: 54px; }
```
